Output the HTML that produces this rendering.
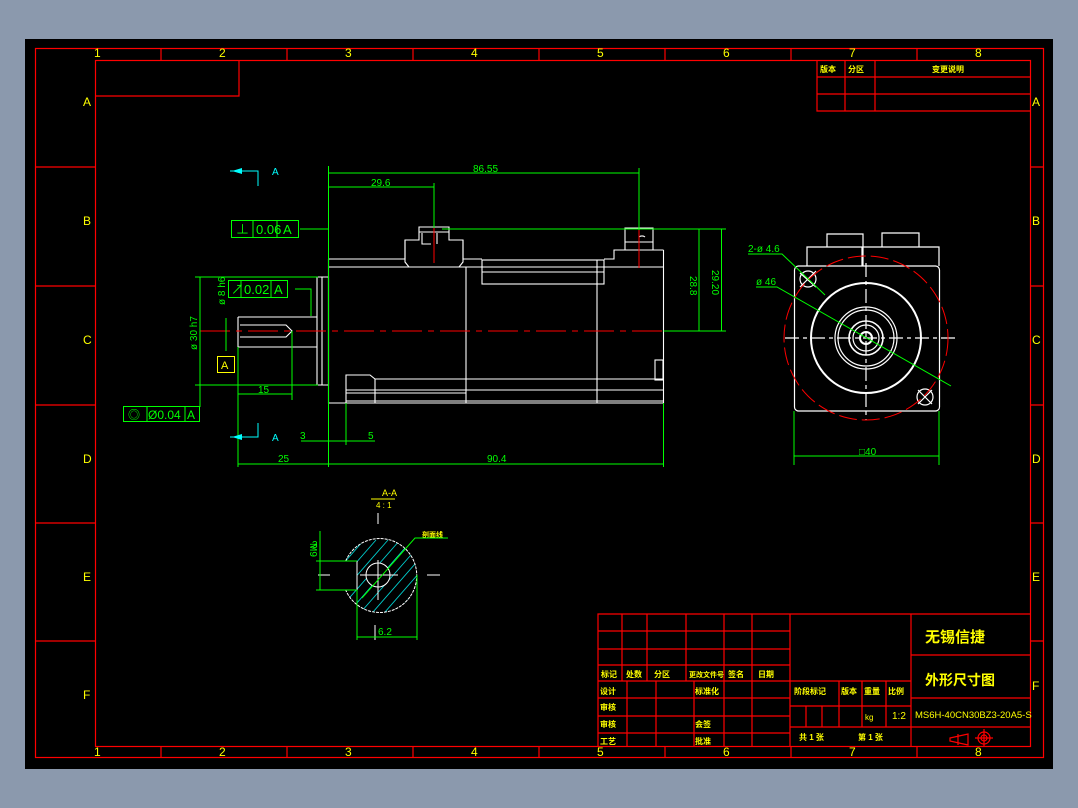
<!DOCTYPE html>
<html><head><meta charset="utf-8"><style>
html,body{margin:0;padding:0;background:#8b99ad;width:1078px;height:808px;overflow:hidden}
svg{display:block}
text{font-family:"Liberation Sans","Noto Sans CJK SC",sans-serif}
</style></head><body>
<svg width="1078" height="808" viewBox="0 0 1078 808" xmlns="http://www.w3.org/2000/svg">
<rect x="25" y="39" width="1028" height="730" fill="#000"/>
<g fill="none" stroke="#f00" stroke-width="1.2">
<rect x="35.5" y="48.5" width="1008" height="709"/>
<rect x="95.5" y="60.5" width="935" height="686"/>
<path d="M161 48V60M287 48V60M413 48V60M539 48V60M665 48V60M791 48V60M917 48V60
M161 746V757M287 746V757M413 746V757M539 746V757M665 746V757M791 746V757M917 746V757
M35 167H95M35 286H95M35 405H95M35 523H95M35 641H95
M1031 167H1043M1031 286H1043M1031 405H1043M1031 523H1043M1031 641H1043
M95 96H239V60"/>
<path d="M817 60V111H1031M817 77H1031M817 94H1031M845 60V111M875 60V111"/>
<path d="M598 746V614H1031M598 631H790M598 649H790M598 665H790M598 681H790M598 698H790M598 716H790M598 733H790
M622 614V681M647 614V681M686 614V681M724 614V681M752 614V746M790 614V746
M627 681V746M656 681V746M694 681V746M724 681V746
M790 681H911M790 706H911M790 727H911M806 706V727M822 706V727M839 681V727M862 681V727M886 681V727
M911 614V746M911 655H1031M911 698H1031M911 727H1031"/>
<path d="M950 738L968 734V745L950 741Z M958 734V745"/>
<circle cx="984" cy="738" r="6"/><circle cx="984" cy="738" r="3"/><path d="M975 738H993M984 729V747"/>
</g>
<g fill="#ff0" font-size="12">
<text x="94" y="57">1</text><text x="219" y="57">2</text><text x="345" y="57">3</text><text x="471" y="57">4</text><text x="597" y="57">5</text><text x="723" y="57">6</text><text x="849" y="57">7</text><text x="975" y="57">8</text>
<text x="94" y="756">1</text><text x="219" y="756">2</text><text x="345" y="756">3</text><text x="471" y="756">4</text><text x="597" y="756">5</text><text x="723" y="756">6</text><text x="849" y="756">7</text><text x="975" y="756">8</text>
<text x="83" y="106">A</text><text x="83" y="225">B</text><text x="83" y="344">C</text><text x="83" y="463">D</text><text x="83" y="581">E</text><text x="83" y="699">F</text>
<text x="1032" y="106">A</text><text x="1032" y="225">B</text><text x="1032" y="344">C</text><text x="1032" y="463">D</text><text x="1032" y="581">E</text><text x="1032" y="690">F</text>
</g>
<g fill="#ff0" font-size="8" font-weight="bold">
<text x="820" y="72">版本</text><text x="848" y="72">分区</text><text x="932" y="72">变更说明</text>
<text x="601" y="677">标记</text><text x="626" y="677">处数</text><text x="654" y="677">分区</text><text x="689" y="677" font-size="7">更改文件号</text><text x="728" y="677">签名</text><text x="758" y="677">日期</text>
<text x="600" y="694">设计</text><text x="695" y="694">标准化</text><text x="600" y="710">审核</text><text x="600" y="727">审核</text><text x="695" y="727">会签</text><text x="600" y="744">工艺</text><text x="695" y="744">批准</text>
<text x="794" y="694">阶段标记</text><text x="841" y="694">版本</text><text x="864" y="694">重量</text><text x="888" y="694">比例</text>
<text x="865" y="720" font-weight="normal">kg</text><text x="892" y="719" font-size="10" font-weight="normal">1:2</text>
<text x="799" y="740">共 1 张</text><text x="858" y="740">第 1 张</text>
<text x="925" y="642" font-size="15">无锡信捷</text><text x="925" y="685" font-size="14">外形尺寸图</text>
<text x="915" y="718" font-size="9.5" font-weight="normal" font-family="Liberation Mono">MS6H-40CN30BZ3-20A5-S</text>
<text x="382" y="496" font-size="9" font-weight="normal">A-A</text><text x="376" y="508" font-size="8" font-weight="normal">4 : 1</text>
<text x="422" y="537" font-size="7">剖面线</text>
</g>
<path d="M371 499H395" stroke="#ff0"/>
<g fill="none" stroke="#fff" stroke-width="1.1">
<path d="M328.5 259V403H663.5V250M328.5 267H663.5M328.5 259H405V240H419V227H449V240H463V259H482M604 259H614V250H625V228H653V250H663.5"/>
<path d="M405 240V262L409 267M463 240V262L459 267M419 232H449M422 233V244H431M437 244V233M614 250H663.5M625 242H653M639 237a4 3 0 0 1 6 0"/>
<rect x="482" y="260" width="122" height="24"/><path d="M482 272H604M597 260V284"/>
<path d="M466 267V403M597 284V403"/>
<path d="M346 403V375H370L375 379H663.5M346 390H466M346 393H466M375 379V403M466 390H663.5M466 401H663.5M346 401H663.5"/>
<rect x="655" y="360" width="8" height="20"/>
<path d="M317 277H328.5V385H317ZM322 277V385"/>
<path d="M238 317H317M238 347H317M238 317V347M240 325H286L292 331L286 337H240"/>
</g>
<path d="M200 331H663" stroke="#f00" stroke-dasharray="30,6,6,6"/>
<path d="M434 223V263M639 228V268" stroke="#f00"/>
<g fill="none" stroke="#0f0" stroke-width="1">
<path d="M328.5 166V467M639 168V230M434 183V228M328.5 173H639M328.5 187H434"/>
<path d="M442 229H726M663.5 331H726M699 229V331M721.5 229V331"/>
<path d="M300 229H328"/>
<rect x="231.5" y="220.5" width="67" height="17"/><path d="M253 220V238M277 220V238"/>
<rect x="228.5" y="280.5" width="59" height="17"/><path d="M241 280V298M271 280V298M295 289H311V316"/>
<path d="M195 277H318M195 385H318M200 277V385M238 347V467M292 331V400M238 394H292M328.5 385V467M663.5 403V467M346 403V445M301 441H375M238 464H663.5"/>
<path d="M226 318V351"/>
<rect x="123.5" y="406.5" width="76" height="15"/><path d="M147 406V422M185 406V422"/>
<path d="M200 385V407"/>
</g>
<rect x="217.5" y="356.5" width="17" height="16" fill="none" stroke="#ff0"/>
<text x="221" y="369" fill="#ff0" font-size="11">A</text>
<g fill="#0f0" font-size="10">
<text x="473" y="172">86.55</text><text x="371" y="186">29.6</text>
<text x="256" y="234" font-size="13">0.06</text><text x="283" y="234" font-size="13">A</text><text x="236" y="234" font-size="13">⊥</text>
<text x="244" y="294" font-size="13">0.02</text><text x="274" y="294" font-size="13">A</text><text x="231" y="294" font-size="13">↗</text>
<text x="148" y="419" font-size="12">Ø0.04</text><text x="187" y="419" font-size="12">A</text>
<text x="128" y="419" font-size="12">◎</text>
<text x="258" y="393">15</text><text x="278" y="462">25</text><text x="487" y="462">90.4</text>
<text x="300" y="439">3</text><text x="368" y="439">5</text>
<text transform="translate(690,276) rotate(90)">28.8</text>
<text transform="translate(712,270) rotate(90)">29.20</text>
<text transform="translate(197,350) rotate(-90)">ø 30 h7</text>
<text transform="translate(225,305) rotate(-90)">ø 8 h6</text>
<text x="748" y="252">2-ø 4.6</text><text x="756" y="285">ø 46</text>
<text x="859" y="455">□40</text><text x="378" y="635">6.2</text>
<text transform="translate(310,543) rotate(90)">M9</text><text x="312" y="548">3</text>
</g>
<g fill="#0ff" font-size="10"><text x="272" y="175">A</text><text x="272" y="441">A</text></g>
<g stroke="#0ff" fill="none"><path d="M230 171H258V186M230 437H258V423"/></g>
<g fill="#0ff"><path d="M232 171L242 168V174Z M232 437L242 434V440Z"/></g>
<g fill="none" stroke="#fff" stroke-width="1.2">
<rect x="794.5" y="266" width="145" height="145" rx="4"/>
<path d="M807 266V247H862V266M827 247V234H863V247M863 266V247H939V266M882 247V233H919V247M812 247H860"/>
<circle cx="866" cy="338" r="55" stroke-width="2"/>
<circle cx="866" cy="338" r="31"/><circle cx="866" cy="338" r="28"/><circle cx="866" cy="338" r="17" stroke-width="1.6"/><circle cx="866" cy="338" r="13"/><circle cx="866" cy="338" r="6" stroke-width="2"/>
<circle cx="808" cy="279" r="8"/><circle cx="925" cy="397" r="8"/>
<path d="M800 273L816 287M816 271L800 287M918 390L932 404M932 390L918 404"/>
<path d="M785 338H955M866 263V420" stroke-dasharray="14,4,4,4"/>
</g>
<circle cx="866" cy="338" r="82" fill="none" stroke="#f00" stroke-dasharray="18,5"/>
<g stroke="#0f0" fill="none">
<path d="M748 254H782L825 295M756 287H777L951 386M794 411V465M939 411V465M794 456H939"/>
</g>
<defs><clipPath id="sc"><path d="M357 561L357 590L345.7 590A37 37 0 1 0 345.7 561Z"/></clipPath></defs>
<g clip-path="url(#sc)">
<g stroke="#0cc" stroke-width="0.9">
<path d="M294 620L364 540M306 620L376 540M318 620L388 540M330 620L400 540M342 620L412 540M354 620L424 540M366 620L436 540M378 620L448 540M390 620L460 540"/>
</g></g>
<circle cx="378" cy="575" r="12" fill="#000" stroke="#fff"/>
<path d="M357 561V590M357 561H346M357 590H346" stroke="#fff" fill="none"/>
<path d="M345.7 561A37 37 0 1 1 345.7 590" stroke="#fff" fill="none" stroke-dasharray="3,1"/>
<path d="M378 513V524M378 560V600M375 625V640M318 575H330M360 575H398M427 575H440" stroke="#fff"/>
<g stroke="#0f0" fill="none"><path d="M316 561H357M316 590H357M320 561V590M357 590V640M417 575V640M357 637H417M362 598L415 538H448M320 531V561"/></g>
</svg>
</body></html>
